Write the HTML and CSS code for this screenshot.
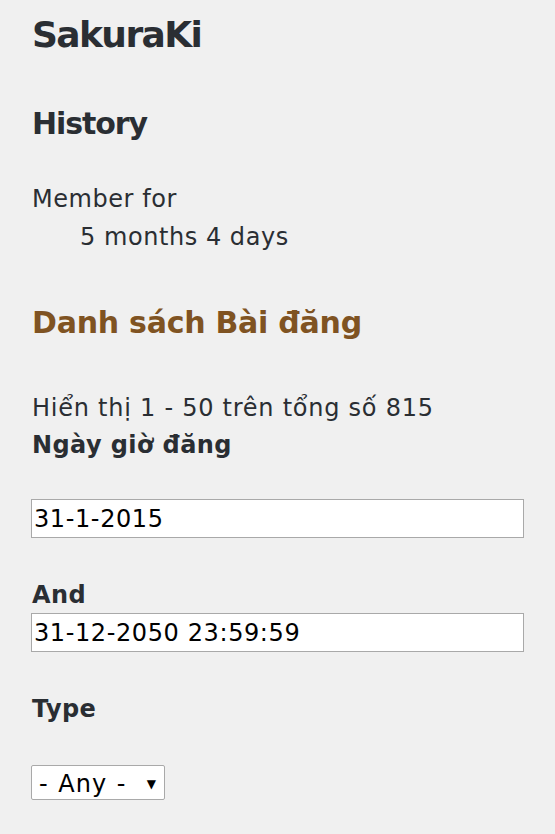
FILE: index.html
```html
<!DOCTYPE html>
<html>
<head>
<meta charset="utf-8">
<link rel="stylesheet" href="styles.css">
</head>
<body>
<div class="page">
  <h1 class="title">SakuraKi</h1>
  <h2 class="section history">History</h2>
  <dl class="member">
    <dt>Member for</dt>
    <dd>5 months 4 days</dd>
  </dl>
  <h2 class="section posts">Danh sách Bài đăng</h2>
  <div class="summary">Hiển thị 1 - 50 trên tổng số 815</div>
  <form class="filters">
    <label class="label">Ngày giờ đăng</label>
    <input class="field first" type="text" value="31-1-2015">
    <label class="label">And</label>
    <input class="field" type="text" value="31-12-2050 23:59:59">
    <label class="label type">Type</label>
    <div class="select">
      <span class="select-text">- Any -</span>
      <span class="arrow">▼</span>
    </div>
  </form>
</div>
</body>
</html>
```
FILE: styles.css
```css
html, body {
  margin: 0;
  padding: 0;
  background: #f0f0f0;
}
.page {
  padding: 0 31px 0 32px;
  font-family: "DejaVu Sans", Verdana, sans-serif;
  color: #2a2e33;
  font-size: 24px;
  letter-spacing: 0.55px;
}
.title {
  margin: 0;
  padding-top: 12px;
  font-size: 36px;
  line-height: 46px;
  font-weight: bold;
  letter-spacing: -1.6px;
}
.section {
  margin: 0;
  line-height: 40px;
  font-weight: bold;
}
.history {
  margin-top: 46px;
  font-size: 30px;
  letter-spacing: -1.1px;
}
.posts {
  margin-top: 47px;
  font-size: 30px;
  letter-spacing: -0.25px;
  color: #7f5322;
}
.member {
  margin: 36px 0 0 0;
  line-height: 38px;
}
.member dt { margin: 0; }
.member dd { margin: 0 0 0 48px; }
.summary {
  margin-top: 46px;
  line-height: 38px;
  letter-spacing: 0.75px;
}
.filters {
  display: flex;
  flex-direction: column;
  align-items: flex-start;
}
.label {
  font-weight: bold;
  line-height: 36px;
  letter-spacing: 0.4px;
}
.field {
  box-sizing: border-box;
  width: 493px;
  height: 39px;
  margin: 0 0 0 -1px;
  padding: 0 2px;
  border: 1px solid #a9a9a9;
  background: #fff;
  font-family: "DejaVu Sans", Verdana, sans-serif;
  font-size: 24px;
  letter-spacing: 0.6px;
  color: #000;
}
.field.first {
  margin-top: 36px;
  margin-bottom: 39px;
}
.type {
  margin-top: 39px;
}
.select {
  box-sizing: border-box;
  margin: 38px 0 0 -1px;
  width: 134px;
  height: 35px;
  border: 1px solid #a9a9a9;
  border-radius: 2px;
  background: #fff;
  display: flex;
  align-items: center;
  justify-content: space-between;
  padding: 2px 8px 0 7px;
  color: #000;
}
.select-text {
  font-size: 24px;
  letter-spacing: 1px;
  word-spacing: 1px;
}
.arrow {
  font-size: 12px;
  letter-spacing: 0;
}
```
